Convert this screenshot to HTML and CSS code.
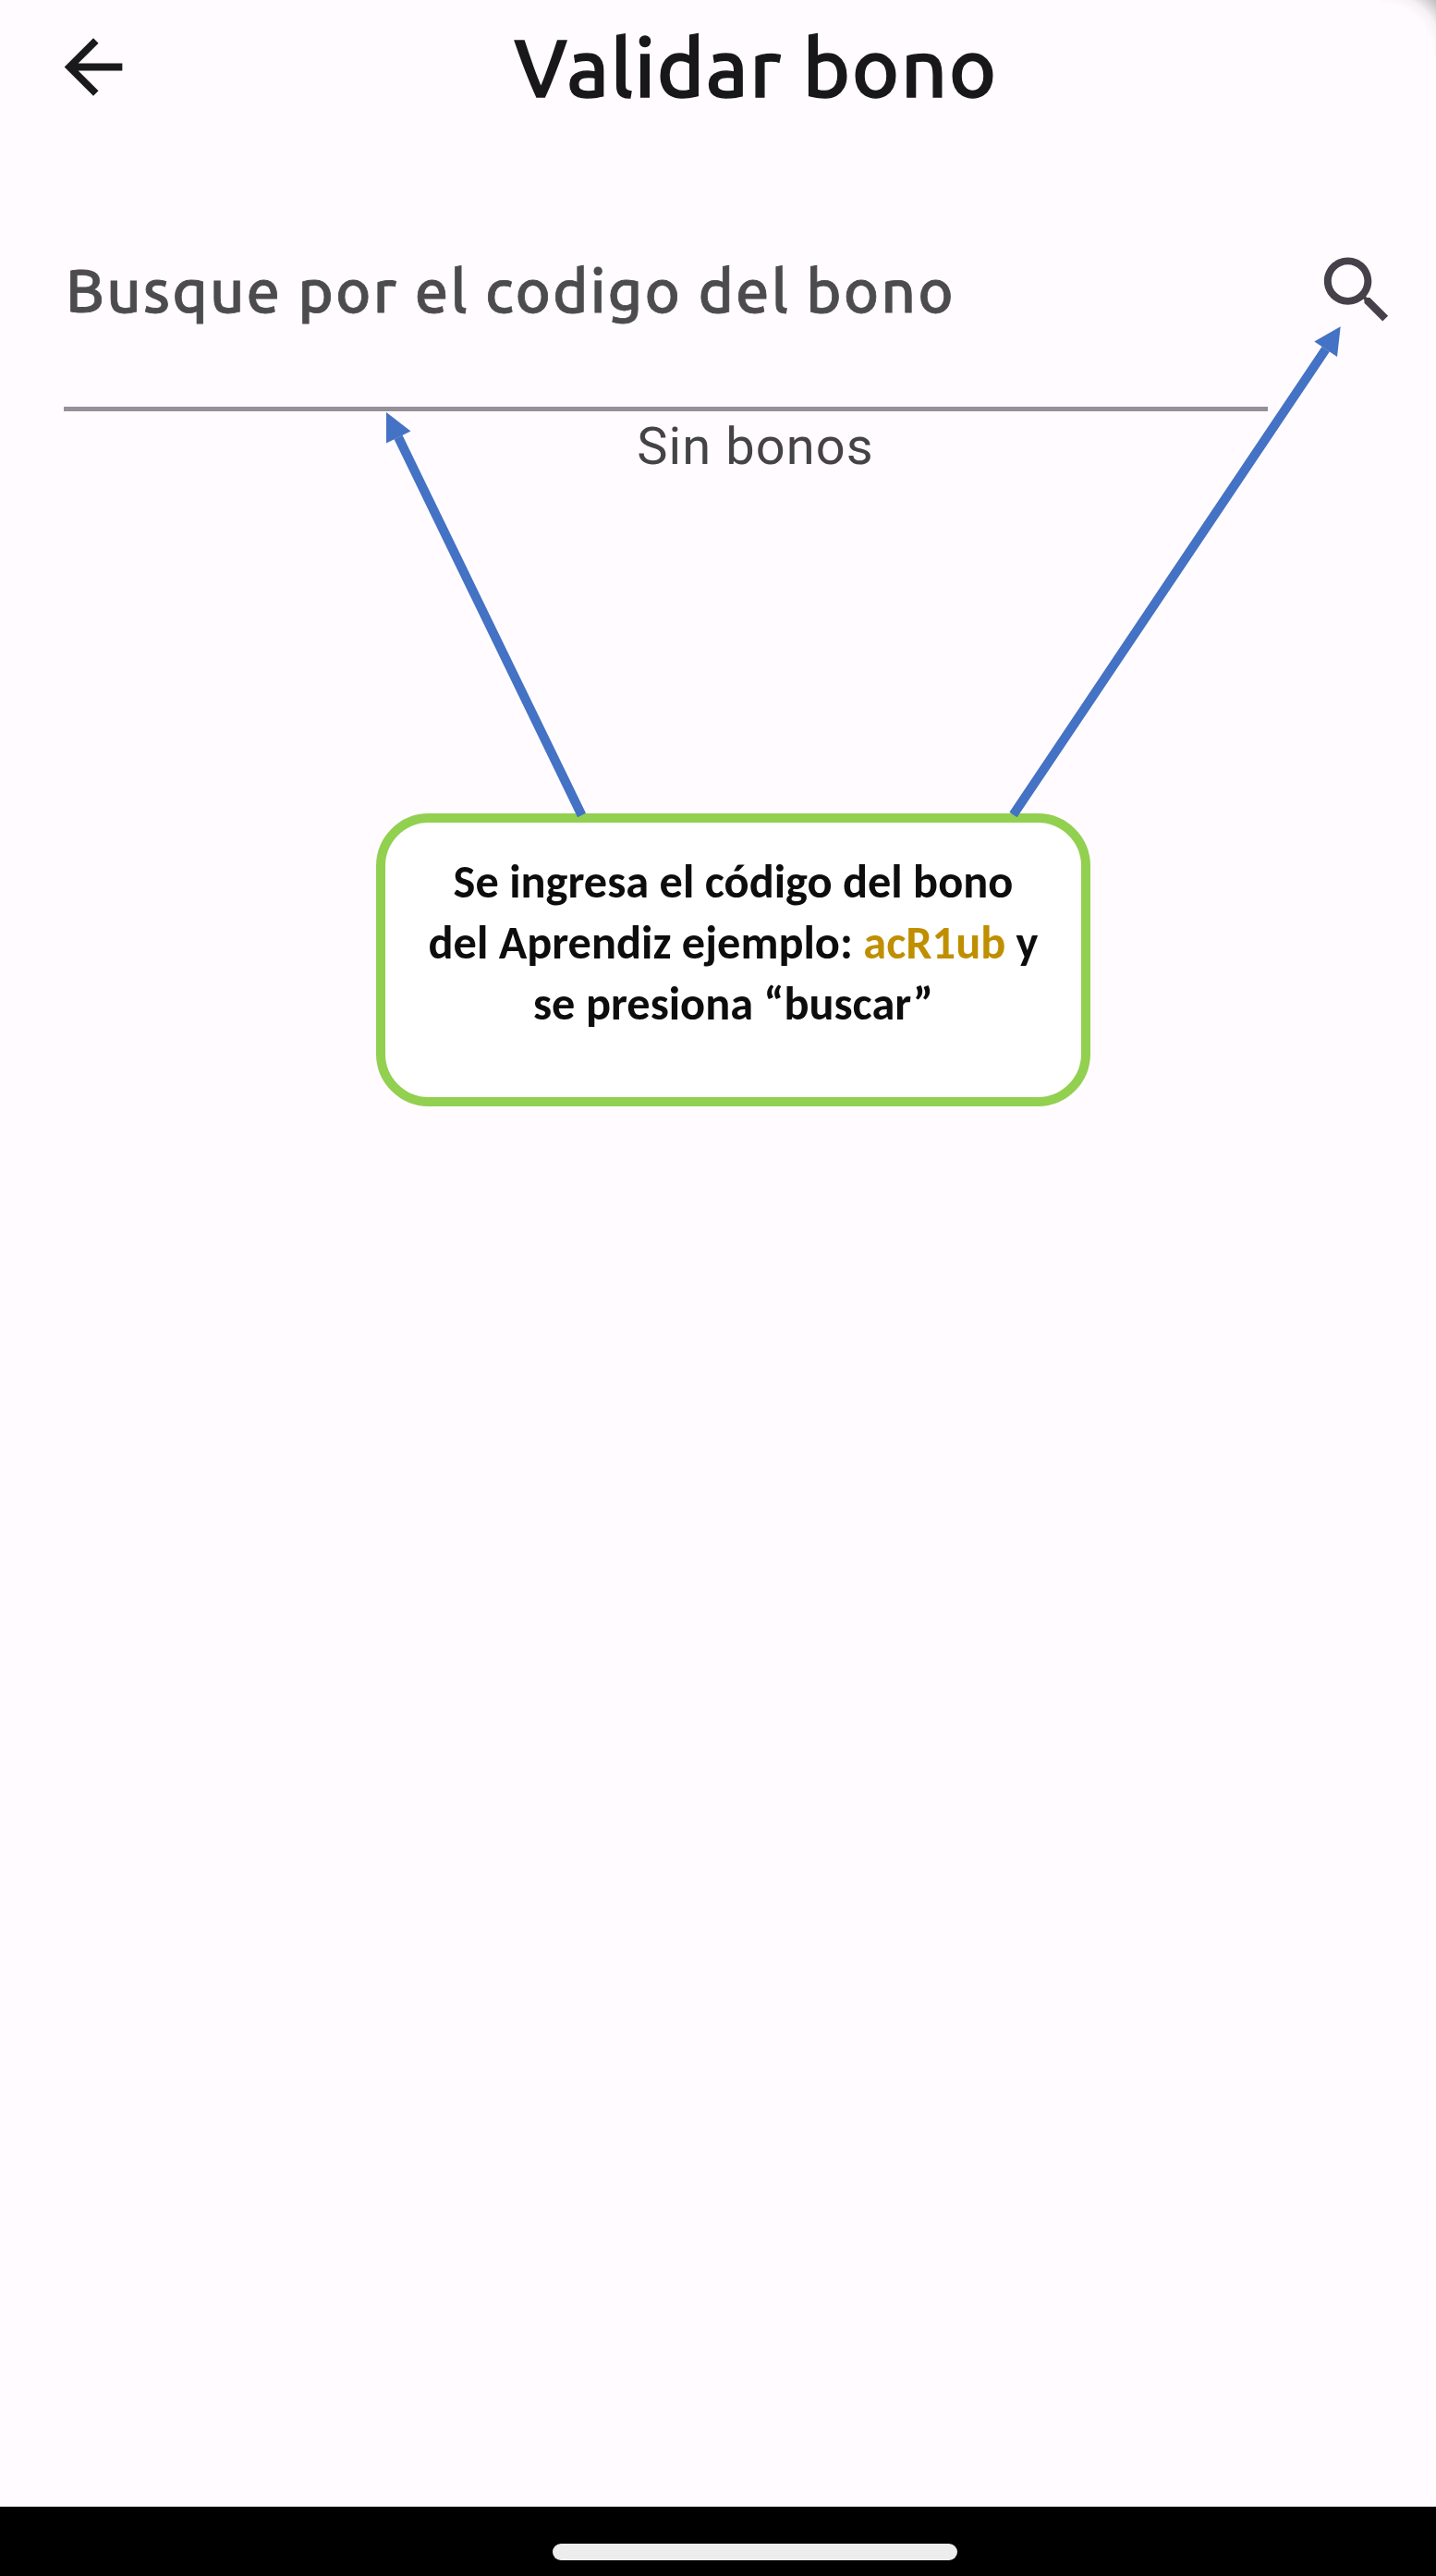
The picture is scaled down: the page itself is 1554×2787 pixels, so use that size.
FILE: index.html
```html
<!DOCTYPE html>
<html lang="es">
<head>
<meta charset="utf-8">
<title>Validar bono</title>
<link rel="stylesheet" href="styles.css">
</head>
<body>
<main class="screen">
  <header class="app-bar">
    <svg class="back-icon" viewBox="0 0 24 24" aria-label="Volver"><path d="M20 11H7.83l5.59-5.59L12 4l-8 8 8 8 1.41-1.41L7.83 13H20v-2z"/></svg>
    <h1 class="title">Validar bono</h1>
  </header>
  <section class="search">
    <div class="field">Busque por el codigo del bono</div>
    <svg class="search-icon" viewBox="0 0 24 24" aria-label="Buscar"><path d="M15.5 14h-.79l-.28-.27C15.41 12.59 16 11.11 16 9.5 16 5.91 13.09 3 9.5 3S3 5.91 3 9.5 5.91 16 9.5 16c1.61 0 3.09-.59 4.23-1.57l.27.28v.79l5 4.99L20.49 19l-4.99-5zm-6 0C7.01 14 5 11.99 5 9.5S7.01 5 9.5 5 14 7.01 14 9.5 11.99 14 9.5 14z"/></svg>
  </section>
  <p class="empty">Sin bonos</p>
  <footer class="nav-bar"><div class="pill"></div></footer>

  <div class="corner"></div>
  <aside class="callout">
    <p class="line">Se ingresa el código del bono</p>
    <p class="line">del Aprendiz ejemplo: <span class="code">acR1ub</span> y</p>
    <p class="line">se presiona “buscar”</p>
  </aside>
  <svg class="arrows" viewBox="0 0 1554 1200">
    <path class="shaft" d="M629.5 882L431 473M1096.5 881.5L1434.7 377.7"/>
    <path class="head" d="M418 446V479.5L444.5 466.5ZM1450.7 353.3L1422.3 369.5L1447 386Z"/>
  </svg>
</main>
</body>
</html>
```
FILE: styles.css
```css
* { box-sizing: border-box; margin: 0; padding: 0; }
body { background: #fffbff; }
.screen {
  position: relative;
  display: flex;
  flex-direction: column;
  width: 1554px;
  height: 2787px;
  overflow: hidden;
  background: #fffbff;
}
.app-bar {
  display: grid;
  grid-template-columns: 94px 1fr 94px;
  align-items: center;
  height: 145px;
  padding: 0 54px;
}
.back-icon { width: 94px; height: 95px; fill: #1a1a1c; }
.title {
  padding-left: 82px;
  text-align: center;
  white-space: nowrap;
  font: 500 87px/100px Ubuntu, "Noto Sans", sans-serif;
  letter-spacing: 1.6px;
  color: #18181a;
  -webkit-text-stroke: 1.4px #18181a;
}
.search {
  display: flex;
  justify-content: space-between;
  height: 300px;
  padding: 120px 38px 0 69px;
}
.field {
  width: 1303px;
  height: 180px;
  padding: 11px 0 0 2px;
  border-bottom: 5px solid #949199;
  font: 500 65px/76px Ubuntu, "Noto Sans", sans-serif;
  letter-spacing: 2.15px;
  white-space: nowrap;
  color: #4c4c4e;
  -webkit-text-stroke: .8px #4c4c4e;
}
.search-icon { width: 95px; height: 96px; margin-top: 1px; fill: #44414a; }
.empty {
  padding-left: 81px;
  text-align: center;
  font: 400 56px/76px Roboto, sans-serif;
  letter-spacing: 1.1px;
  color: #444346;
}
.nav-bar {
  display: flex;
  justify-content: center;
  height: 75px;
  margin-top: auto;
  padding: 40px 0 0 80px;
  background: #000;
}
.pill { width: 438px; height: 18px; border-radius: 9px; background: #ededed; }
.corner {
  position: absolute;
  top: 0;
  right: 0;
  width: 60px;
  height: 60px;
  background: radial-gradient(circle at 0 100%, transparent 56px, rgba(60, 55, 60, .05) 68px, rgba(60, 55, 60, .32) 85px);
}
.callout {
  position: absolute;
  left: 407px;
  top: 880px;
  width: 773px;
  height: 317px;
  padding-top: 31px;
  border: 10px solid #92d050;
  border-radius: 57px;
  background: #fff;
  text-align: center;
  font: 700 50.4px/66px Calibri, Carlito, Lato, sans-serif;
  color: #0d0d0d;
}
.line { white-space: nowrap; }
.code { color: #bf8f00; }
.arrows { position: absolute; left: 0; top: 0; width: 1554px; height: 1200px; }
.shaft { fill: none; stroke: #4472c4; stroke-width: 10; }
.head { fill: #4472c4; }
```
